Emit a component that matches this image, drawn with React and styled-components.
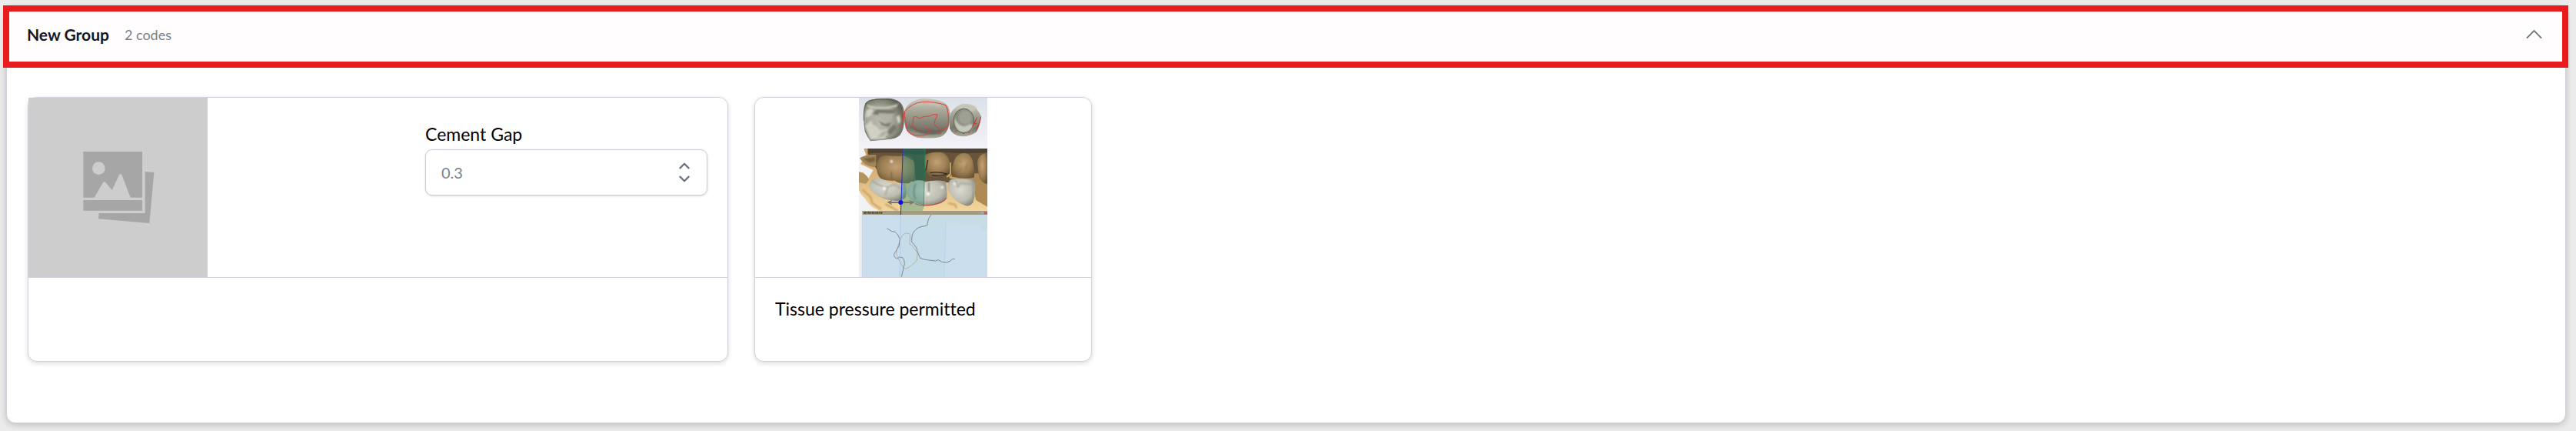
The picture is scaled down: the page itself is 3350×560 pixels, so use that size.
import React, { useState } from "react";
import styled, { createGlobalStyle } from "styled-components";

const GlobalStyle = createGlobalStyle`
  * {
    box-sizing: border-box;
  }
  body {
    margin: 0;
    background: #ebebeb;
    font-family: Lato, "Noto Sans", sans-serif;
    font-variant-ligatures: none;
    color: #000;
  }
`;

const Page = styled.main`
  padding: 8px 13px 11px 8px;
`;

const Panel = styled.section`
  background: #fff;
  border: 1px solid #d1d1db;
  border-radius: 12px;
  box-shadow: 0 2px 8px rgba(0, 0, 0, 0.2);
`;

const Header = styled.header`
  display: flex;
  align-items: center;
  gap: 20px;
  height: 81px;
  margin: -2px -4px 0 -5px;
  padding: 0 22px 6px 23px;
  border: 8px solid #e81c1c;
  background: #fffdfe;
`;

const Title = styled.h2`
  margin: 0;
  font-size: 21px;
  line-height: 28px;
  font-weight: 700;
  color: #111827;
`;

const Count = styled.span`
  font-size: 18px;
  line-height: 28px;
  color: #7b818c;
`;

const Toggle = styled.button`
  display: flex;
  margin-left: auto;
  padding: 0;
  border: 0;
  background: none;
  color: #6b7280;
  cursor: pointer;
`;

const Cards = styled.div`
  display: flex;
  flex-wrap: wrap;
  align-items: flex-start;
  gap: 34px;
  padding: 38px 27px 79px;
`;

const Card = styled.article`
  width: ${(props) => (props.$wide ? "911px" : "439px")};
  max-width: 100%;
  background: #fff;
  border: 1px solid #d1d1db;
  border-radius: 12px;
  box-shadow: 0 2px 6px rgba(0, 0, 0, 0.14);
`;

const CardTop = styled.div`
  display: flex;
  justify-content: ${(props) => (props.$center ? "center" : "space-between")};
  border-bottom: 1px solid #d1d1db;

  svg {
    display: block;
  }
`;

const CardText = styled.p`
  min-height: 108px;
  margin: 0;
  padding: 24px 26px;
  font-size: 23px;
  line-height: 32px;
`;

const Field = styled.div`
  display: flex;
  flex-direction: column;
  gap: 4px;
  padding: 31px 26px 0;
`;

const Label = styled.label`
  font-size: 23px;
  line-height: 32px;
`;

const SelectBox = styled.div`
  display: grid;
  align-items: center;
  width: 367px;
  color: #6b7280;

  > * {
    grid-area: 1 / 1;
  }
  svg {
    justify-self: end;
    margin-right: 14px;
    pointer-events: none;
  }
`;

const Select = styled.select`
  appearance: none;
  width: 100%;
  height: 60px;
  padding: 0 20px;
  border: 1px solid #c9ced6;
  border-radius: 9px;
  box-shadow: 0 1px 3px rgba(0, 0, 0, 0.14);
  background: #fff;
  font-family: inherit;
  font-size: 20px;
  color: #7b818c;
`;

const ChevronUp = () => (
  <svg width="29" height="29" viewBox="0 0 24 24" fill="none" stroke="currentColor" strokeWidth="1.5">
    <path d="m4.5 15.75 7.5-7.5 7.5 7.5" strokeLinecap="round" strokeLinejoin="round" />
  </svg>
);

const UpDown = () => (
  <svg width="32" height="32" viewBox="0 0 20 20" fill="none" stroke="currentColor" strokeWidth="1.4">
    <path d="m6.5 6.5 3.5-3.5 3.5 3.5M6.5 13.5l3.5 3.5 3.5-3.5" strokeLinecap="round" strokeLinejoin="round" />
  </svg>
);

const Placeholder = () => (
  <svg width="233" height="233" viewBox="0 0 233 233" role="img" aria-label="No image">
    <rect width="233" height="233" fill="#cdcdcd" />
    <g transform="translate(53 53) scale(.3333)">
      <path fill="#a6a6a6" d="M55 51h230v179h-46L205 141q-5-6-10 0l-28 60-25-30q-5-5-10 0L98 230H55z" />
      <circle cx="115" cy="116" r="25" fill="#cdcdcd" />
      <path fill="#a6a6a6" d="M55 240h230v41H55zM296 129l35 3-18 198-199-17 2-22h180z" />
    </g>
  </svg>
);

const CrownScan = () => (
  <svg width="167" height="233" viewBox="471 51 501 699" role="img" aria-label="Crown scan">
    <defs>
      <linearGradient id="sky" x1="0" y1="0" x2="0" y2="1">
        <stop offset="0" stopColor="#dce1e8" />
        <stop offset="1" stopColor="#f3f3f8" />
      </linearGradient>
      <linearGradient id="shell" x1="0" y1="0" x2="0" y2="1">
        <stop offset="0" stopColor="#c9c8ba" />
        <stop offset="0.35" stopColor="#a3a293" />
        <stop offset="0.75" stopColor="#78776a" />
        <stop offset="1" stopColor="#aaa99b" />
      </linearGradient>
      <radialGradient id="hollow" cx="0.4" cy="0.55" r="0.65">
        <stop offset="0" stopColor="#bfbfb2" />
        <stop offset="0.6" stopColor="#a2a294" />
        <stop offset="1" stopColor="#66675a" />
      </radialGradient>
      <radialGradient id="stone" cx="0.5" cy="0.4" r="0.65">
        <stop offset="0" stopColor="#c1a274" />
        <stop offset="0.55" stopColor="#9e8055" />
        <stop offset="1" stopColor="#6a5537" />
      </radialGradient>
      <radialGradient id="enamel" cx="0.45" cy="0.4" r="0.65">
        <stop offset="0" stopColor="#dcdbd2" />
        <stop offset="0.65" stopColor="#bdbdb1" />
        <stop offset="1" stopColor="#85857a" />
      </radialGradient>
      <linearGradient id="gum" x1="0" y1="0" x2="0" y2="1">
        <stop offset="0" stopColor="#c79d62" />
        <stop offset="1" stopColor="#f6d99f" />
      </linearGradient>
      <filter id="soft">
        <feGaussianBlur stdDeviation="3" />
      </filter>
    </defs>

    {/* occlusal view */}
    <rect x="471" y="51" width="501" height="198" fill="url(#sky)" />
    <path fill="#75756a" d="M496 72q18-20 74-18 40-4 62 16 18 14 16 62 0 44-16 64-14 14-36 16l-80 8q-12-16-22-38-10-62 2-110z" />
    <path fill="url(#hollow)" d="M499 76q16-18 66-18 40-2 58 14 20 16 16 60l-6 44q-18 28-48 36l-70 6-18-38q-12-62 2-104z" />
    <g filter="url(#soft)">
      <path fill="#d0d0c4" d="M502 78q58 22 122-4l-6 12q-60 16-112 2zM496 160l22-20 34 36 38-2-18 36-56 4zM500 100l18-8 12 14-16 18-18 4zM616 126l14-8 4 26-10 10z" />
      <path fill="#77786e" d="M522 112l20-16 78 4-14 12-32 2-32 4zM544 138l28 16 24-6-8 16-26-6zM578 184l30-30 12 14-24 28z" />
      <path fill="#b2b2a4" d="M546 110l58 4-10 30-34-4zM518 134l20 2 8 24-20-2zM560 184l26-6-14 22-30 6z" />
    </g>
    <path fill="none" stroke="#3e4f32" strokeWidth="2" d="M490 140q-4-70 20-78 70-16 118 8 14 18 14 62" />
    <path fill="url(#shell)" d="M650 98q14-30 52-40 14-8 64 0 34 6 50 22 14 20 8 64-4 48-36 60-32 8-90 2-30-8-44-34-12-40-4-74z" />
    <path fill="#c2c1b2" filter="url(#soft)" d="M682 70q50-20 112 4l-8 12q-50-18-104-2z" />
    <path fill="#67665b" filter="url(#soft)" d="M664 154q40 30 84 18 26 10 60-4-12 26-44 26-74 4-100-40z" />
    <path fill="none" stroke="#e23d38" strokeWidth="3" d="M650 104q28-32 66-36 44-4 94 12 12 22 10 74-6 22-26 24l-24-16q-8-10-2-24 10-16 8-22-18-2-28 6-20 2-28 4l-12 6q-14-12-24-6-2 16-4 32 2 8 14 14 14 4 42-2 10 2 12 10-6 20-42 18-34 0-46-18-6-28-8-44-6-14-2-32zM779 188l6-4 6 5-8 4zM640 96q8 34-2 72" />
    <path fill="url(#shell)" d="M828 112q14-22 44-36 34-4 54 14 14 14 22 34-4 36-18 60-24 18-56 18-38-2-48-30-6-38 2-60z" />
    <ellipse cx="890" cy="92" rx="38" ry="14" fill="#c6c5b6" filter="url(#soft)" />
    <ellipse cx="880" cy="141" rx="40" ry="48" fill="#8a8b7f" />
    <path fill="#c8c9bd" filter="url(#soft)" d="M844 128q-2 52 34 58 30-2 40-26l-14-8q-20 18-40 4-14-12-20-28z" />
    <ellipse cx="886" cy="128" rx="26" ry="28" fill="#9fa094" filter="url(#soft)" />
    <ellipse cx="880" cy="141" rx="40" ry="48" fill="none" stroke="#415337" strokeWidth="2" />
    <path fill="none" stroke="#da2929" strokeWidth="3" d="M947 126q-6 28-18 50M914 164l18-36M920 150l10 2M846 182l5 2M876 190h6M898 188l6-3" />

    {/* arch from the side */}
    <rect x="471" y="249" width="501" height="258" fill="#f1f2f6" />
    <path fill="url(#gum)" d="M490 249h482v258H600q-80-14-104-62-16-14-25-34v-70l36 26 20-34-50-24 22-34z" />
    <path fill="#67543a" d="M506 249h466v132H690L540 330l-34-58z" />
    <path fill="#4d4231" d="M506 249h466v14q-90 10-180-2-60 16-120 8-110-8-166 0z" />
    <path fill="#a3855a" d="M474 286q28-16 64-12v42l-8 6q-38-4-56-36z" />
    <path fill="#785e3b" filter="url(#soft)" d="M486 288l48-6v18l-22 4z" />
    <path fill="#b2945f" d="M471 340q28 4 40 30l-12 16-28-4z" />
    <path fill="#ae8a55" d="M816 358l30-12h92l34 36v94l-44-26-14-60z" />
    <path fill="url(#stone)" d="M540 314q4-38 34-38 50 4 88 0 28 6 28 50-2 40-22 58-38 4-58-10-34 2-54-8-18-16-16-52z" />
    <path fill="none" stroke="#7b6340" strokeWidth="5" filter="url(#soft)" d="M604 374q-10-20-8-36" />
    <path fill="url(#stone)" d="M724 280q16-20 68-16 28 8 34 40 0 34-14 44-34 16-66 10-22-24-22-78z" />
    <path fill="none" stroke="#382d20" strokeWidth="4" d="M748 344q34-6 66 4-20 10-58 6M740 294l-8 40" />
    <path fill="url(#stone)" d="M834 344q2-40 14-60 20-24 50-14 16 12 20 42 6 38 2 50-44 8-86-4z" />
    <path fill="none" stroke="#8a6d46" strokeWidth="3" filter="url(#soft)" d="M862 296l14 8M874 322l-16 20M894 308l-8 22" />
    <path fill="url(#stone)" d="M932 302q6-34 40-36v122q-24-6-32-28z" />
    <path fill="none" stroke="#d1aa69" strokeWidth="5" d="M814 360l14-12v-44M824 362l36 6" />
    <path fill="url(#enamel)" d="M510 394q2-28 38-32l54 24 48-2q12 28 2 58-18 14-44 10-34-2-58-16-28-12-40-42z" />
    <path fill="none" stroke="#9a9a8e" strokeWidth="4" filter="url(#soft)" d="M522 376l34 18 26 6 26-10 34 18M582 402l-8 28" />
    <path fill="url(#enamel)" d="M656 418q10-36 34-44 18-6 40 4 40-8 78-2 8 30 6 60-2 22-36 30-44 12-82-4-34-18-40-44z" />
    <path fill="none" stroke="#77786e" strokeWidth="5" filter="url(#soft)" d="M744 382v36M692 386q-14 32 0 60" />
    <path fill="url(#enamel)" d="M818 406q0-32 14-38 48-4 92 2 6 36-8 90-12 16-28 12-54-18-70-66z" />
    <path fill="none" stroke="#8a8a7d" strokeWidth="3" filter="url(#soft)" d="M848 374l10 26 8-16 40 4M914 384l4 60" />
    <g fill="#fff" filter="url(#soft)">
      <circle cx="570" cy="404" r="6" />
      <circle cx="740" cy="426" r="6" />
      <circle cx="796" cy="400" r="5" />
      <circle cx="844" cy="386" r="5" />
      <circle cx="598" cy="299" r="5" />
    </g>
    <path fill="none" stroke="#bd3c30" strokeWidth="3" d="M690 464q30 12 70 4 34-6 54-26" />
    <path fill="none" stroke="#b99353" strokeWidth="5" filter="url(#soft)" d="M484 408l32 30 8 24 34 24M820 462l26 6 6 14M574 466l50 26" />
    <path fill="#3f9684" fillOpacity=".42" d="M643 249h86l-5 230-12 28h-78z" />
    <path fill="#004d3e" fillOpacity=".36" d="M648 249h81v124h-36l-8-76-40-22z" />
    <path fill="none" stroke="#1f8c55" strokeWidth="2" d="M729 249l-5 226" />

    {/* 2D cross section */}
    <rect x="471" y="507" width="14" height="243" fill="#eceff3" />
    <rect x="484" y="507" width="488" height="243" fill="#cbdeee" />
    <rect x="484" y="492" width="488" height="15" fill="#a39a82" />
    <path stroke="#353329" strokeWidth="5" strokeDasharray="8 2 4 2" d="M490 500h72" />
    <rect x="947" y="495" width="11" height="10" fill="#91a9c1" />
    <rect x="960" y="495" width="12" height="10" fill="#bc6262" />
    <path fill="#c5dce9" d="M632 507h179l-9 243H628z" />
    <path fill="#c8dce6" d="M590 507h382v62l-28-4-2-18-130-4-106 2-60-16z" />
    <path fill="none" stroke="#b7cee8" strokeWidth="2" d="M811 543l-9 207M484 507v243" />
    <path fill="none" stroke="#b5b4a6" strokeWidth="3" d="M632 604q8-22 22-25 16 0 17 6l-2 37 10 5 20 29-2 30-20 18-19 13q-10 2-14-4l-18-32q-14-20-4-48z" />
    <path fill="none" stroke="#828990" strokeWidth="3" strokeLinejoin="round" d="M580 560l18 11 15 3q10 8 18 28l-4 28-14 22q-8 8-4 18l10 9 10-7 12 2q8 6 8 24l-12 51M753 507q-12 16-12 22l-4 20-20 4q-14 2-24 12-18 14-16 48l17 20q4 6 4 14 4 12 12 29l18 6 42 5 10-4q16 12 34 10 18-6 22-14l9 1" />
    <path stroke="#2529d7" strokeWidth="3" d="M643 249l-9 258" />
    <path stroke="#a9c4ee" strokeWidth="2" d="M634 507l-4 243" />
    <path fill="#77777a" d="M580 458l20-9-3 7h74l-3-7 22 10-22 10 3-7h-74l3 7z" />
    <circle cx="634" cy="459" r="9" fill="#1010e6" />
  </svg>
);

const App = () => {
  const [open, setOpen] = useState(true);

  return (
    <Page>
      <GlobalStyle />
      <Panel>
        <Header>
          <Title>New Group</Title>
          <Count>2 codes</Count>
          <Toggle aria-label="Toggle group" aria-expanded={open} onClick={() => setOpen(!open)}>
            <ChevronUp />
          </Toggle>
        </Header>
        {open && (
          <Cards>
            <Card $wide>
              <CardTop>
                <Placeholder />
                <Field>
                  <Label htmlFor="cement-gap">Cement Gap</Label>
                  <SelectBox>
                    <Select id="cement-gap" defaultValue="0.3">
                      <option>0.3</option>
                    </Select>
                    <UpDown />
                  </SelectBox>
                </Field>
              </CardTop>
              <CardText />
            </Card>
            <Card>
              <CardTop $center>
                <CrownScan />
              </CardTop>
              <CardText>Tissue pressure permitted</CardText>
            </Card>
          </Cards>
        )}
      </Panel>
    </Page>
  );
};

export default App;
